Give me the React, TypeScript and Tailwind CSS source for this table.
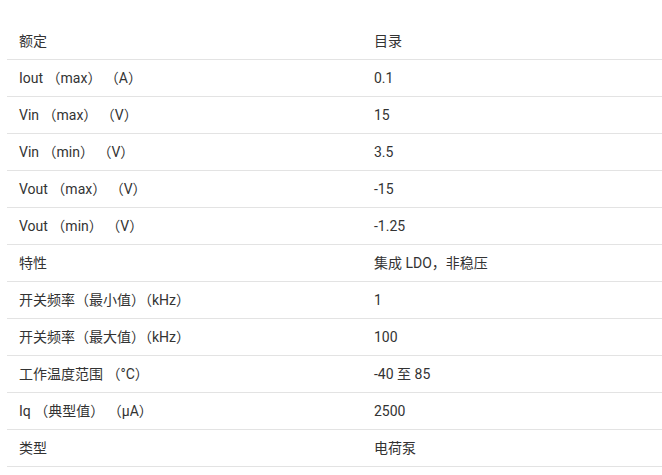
import React from "react";

const rows: [string, string][] = [
  ["额定", "目录"],
  ["Iout （max） （A）", "0.1"],
  ["Vin （max） （V）", "15"],
  ["Vin （min） （V）", "3.5"],
  ["Vout （max） （V）", "-15"],
  ["Vout （min） （V）", "-1.25"],
  ["特性", "集成 LDO，非稳压"],
  ["开关频率（最小值）（kHz）", "1"],
  ["开关频率（最大值）（kHz）", "100"],
  ["工作温度范围 （°C）", "-40 至 85"],
  ["Iq （典型值） （μA）", "2500"],
  ["类型", "电荷泵"],
];

export default function App() {
  return (
    <div
      className="w-[662px] h-[475px] bg-white pt-[23px] pl-[7px] text-[14px] text-[#333333]"
      style={{ fontFamily: 'Roboto, "Noto Sans CJK SC", sans-serif' }}
    >
      <div className="flex flex-col">
        {rows.map(([a, b], i) => (
          <div
            key={i}
            className="grid grid-cols-[355px_1fr] h-[37px] items-center border-b border-[#e3e3e3] pl-[12px]"
          >
            <div className="whitespace-pre">{a}</div>
            <div className="whitespace-pre">{b}</div>
          </div>
        ))}
      </div>
    </div>
  );
}
